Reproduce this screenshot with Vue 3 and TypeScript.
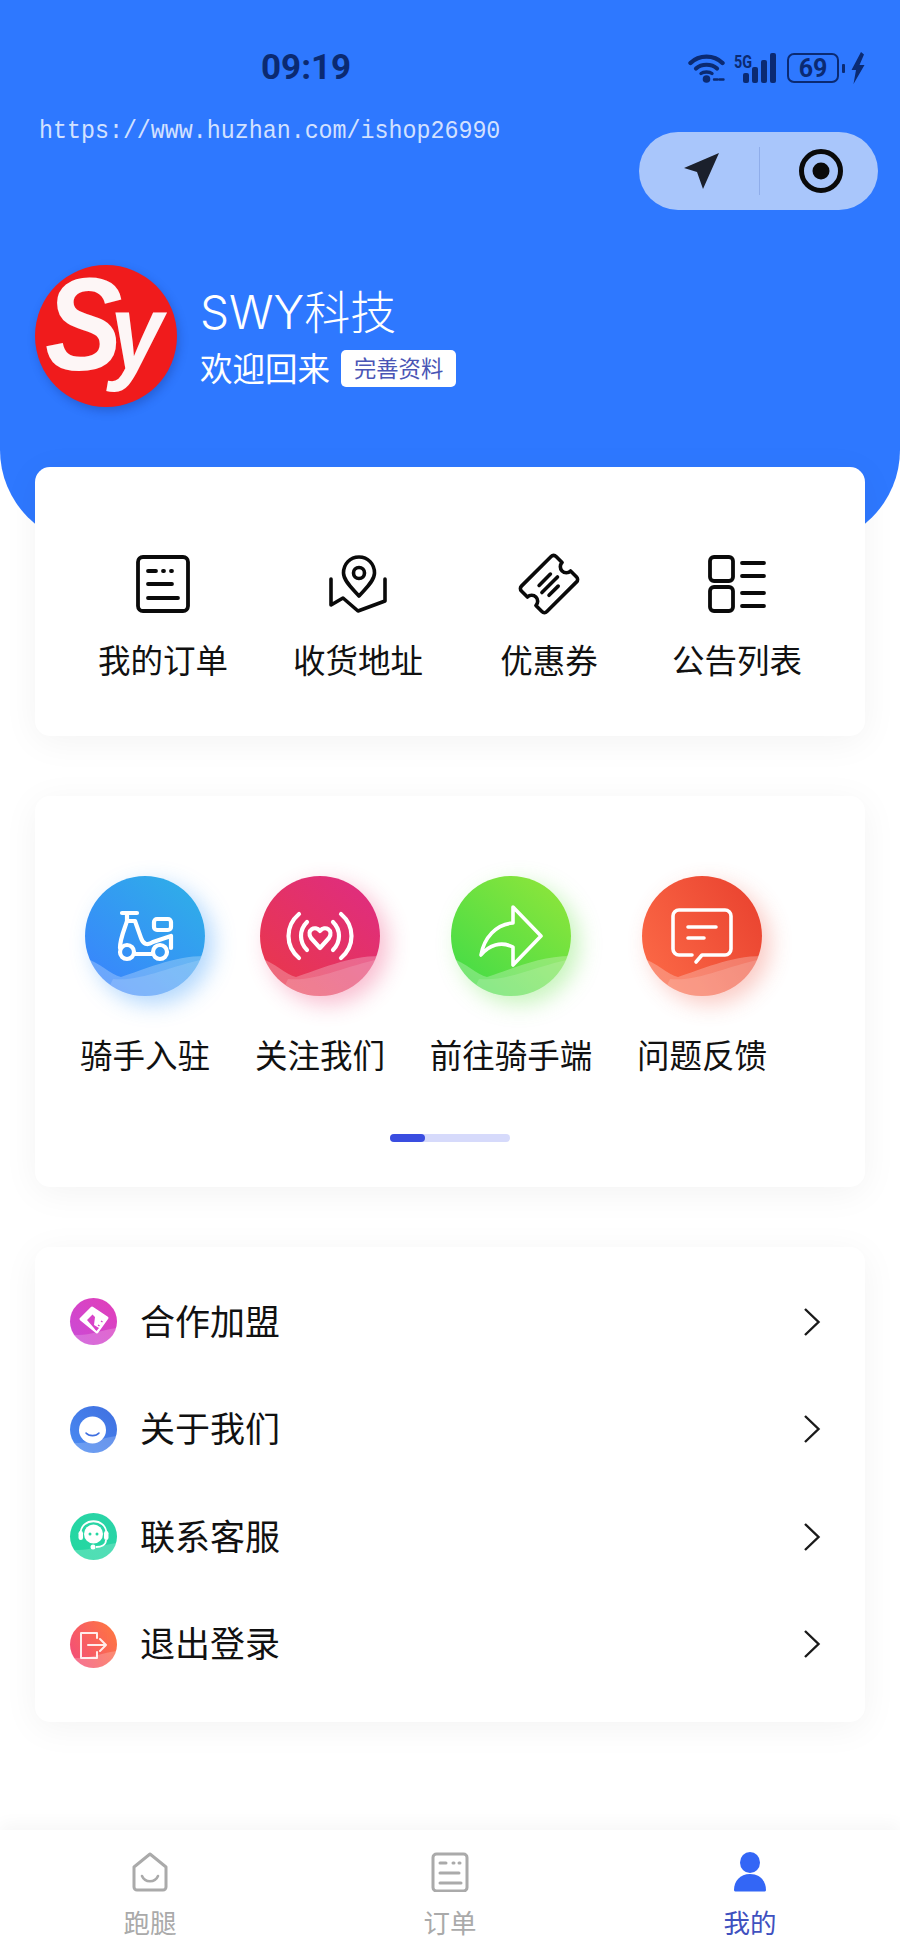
<template>
  <div class="page">
    <header class="hero">
      <div class="status">
        <span class="time">09:19</span>
        <div class="status-icons">
          <svg class="wifi" width="37" height="30" viewBox="0 0 37 30" fill="none" stroke="#0b2a72" stroke-linecap="round">
            <path d="M2.500 10C11 1.500 26 1.500 34.500 10" stroke-width="4.400" />
            <path d="M8 15.500C13.500 10.500 23.500 10.500 29 15.500" stroke-width="4.200" />
            <path d="M13 20.500C15.500 18.500 21.500 18.500 24 20.500" stroke-width="3.400" />
            <circle cx="18.500" cy="26" r="3.800" fill="#0b2a72" stroke="none" />
            <path d="M26 26.500h3.500M31.500 26.500h4" stroke-width="2.400" />
          </svg>
          <div class="signal">
            <span class="five-g">5G</span>
            <div class="bars">
              <i v-for="h in barHeights" :key="h" :style="{ height: h + 'px' }"></i>
            </div>
          </div>
          <div class="battery"><span>69</span></div>
          <i class="battery-nub"></i>
          <svg width="14" height="32" viewBox="0 0 14 32"><path d="M10 0L0.500 18h4.500L2.500 32L13.500 13H8.500L13 2.500Z" fill="#0b2a72" /></svg>
        </div>
      </div>

      <div class="url-row">
        <span class="url">https://www.huzhan.com/ishop26990</span>
        <div class="capsule">
          <div class="capsule-btn nav">
            <svg width="38" height="38" viewBox="0 0 38 38"><path d="M36 1L1 16l13 4 6 17z" fill="#1b202c" /></svg>
          </div>
          <i class="capsule-line"></i>
          <div class="capsule-btn home">
            <svg width="46" height="46" viewBox="0 0 46 46">
              <circle cx="23" cy="23" r="19.500" fill="none" stroke="#0a0a0a" stroke-width="5" />
              <circle cx="23" cy="23" r="8.500" fill="#0a0a0a" />
            </svg>
          </div>
        </div>
      </div>

      <div class="profile">
        <div class="avatar"><span class="logo">S<span class="logo-y">y</span></span></div>
        <div class="info">
          <div class="name">SWY科技</div>
          <div class="welcome">
            <span>欢迎回来</span>
            <span class="complete">完善资料</span>
          </div>
        </div>
      </div>
    </header>

    <main class="cards">
      <section class="card shortcuts">
        <div class="shortcut">
          <svg width="60" height="60" viewBox="0 0 60 60" fill="none" stroke="#0a0a0a" stroke-width="3.800" stroke-linecap="round">
            <rect x="5" y="3" width="50" height="54" rx="5" />
            <path d="M15 17h8M30 17h1M38 17h1M15 30h24M15 44h30" />
          </svg>
          <span>我的订单</span>
        </div>
        <div class="shortcut">
          <svg width="60" height="60" viewBox="0 0 60 60" fill="none" stroke="#0a0a0a" stroke-width="3.600" stroke-linecap="round" stroke-linejoin="round">
            <path d="M31 3C22 3 15.500 10 15.500 19C15.500 27 25 35 31 42C37 35 46.500 27 46.500 19C46.500 10 40 3 31 3Z" />
            <circle cx="31" cy="19" r="5.500" />
            <path d="M3 25V51L15 44L30 57L57 47V25" />
          </svg>
          <span>收货地址</span>
        </div>
        <div class="shortcut">
          <svg width="64" height="64" viewBox="0 0 64 64" fill="none" stroke="#0a0a0a" stroke-width="3.600" stroke-linecap="round" stroke-linejoin="round">
            <g transform="rotate(-45 32 32)">
              <path d="M11 14H53a3.500 3.500 0 0 1 3.500 3.500V26a6 6 0 0 0 0 12V46.500a3.500 3.500 0 0 1-3.500 3.500H11a3.500 3.500 0 0 1-3.500-3.500V38a6 6 0 0 0 0-12V17.500a3.500 3.500 0 0 1 3.500-3.500Z" />
              <path d="M24 26H40M21 33H43M24 40H37" />
            </g>
          </svg>
          <span>优惠券</span>
        </div>
        <div class="shortcut">
          <svg width="60" height="60" viewBox="0 0 60 60" fill="none" stroke="#0a0a0a" stroke-width="3.800" stroke-linecap="round" stroke-linejoin="round">
            <rect x="3" y="3" width="23" height="24" rx="4" />
            <rect x="3" y="33" width="23" height="24" rx="4" />
            <path d="M35 9H57M35 22H57M35 39H57M35 52H57" />
          </svg>
          <span>公告列表</span>
        </div>
      </section>

      <section class="card entries">
        <div class="entry-row">
          <div class="entry">
            <div class="bubble blue">
              <svg viewBox="0 0 120 120" width="120" height="120">
                <path class="wave" d="M0 82C14 86 26 99 36 101C58 94 88 80 120 80V120H0Z" />
                <path class="wave front" d="M28 103C55 106 85 90 120 83V120H20Z" />
                <g class="glyph thick">
                  <path d="M37 37H52M42 37L42 45C40 52 35 62 35 72" />
                  <path d="M42 45H50L56 62C58 68 62 70 68 66L86 60V72" />
                  <rect x="69" y="43" width="17" height="11" rx="3" />
                  <circle cx="42" cy="76" r="7" />
                  <circle cx="75" cy="76" r="7" />
                  <path d="M49 78H68" />
                </g>
              </svg>
            </div>
            <span>骑手入驻</span>
          </div>
          <div class="entry">
            <div class="bubble red">
              <svg viewBox="0 0 120 120" width="120" height="120">
                <path class="wave" d="M0 82C14 86 26 99 36 101C58 94 88 80 120 80V120H0Z" />
                <path class="wave front" d="M28 103C55 106 85 90 120 83V120H20Z" />
                <g class="glyph thick">
                  <path d="M39 38C25 50 25 70 39 82M47 46C39 54 39 66 47 74M81 38C95 50 95 70 81 82M73 46C81 54 81 66 73 74" />
                  <path d="M60 72L51 62C46 54 55 49 60 55C65 49 74 54 69 62Z" />
                </g>
              </svg>
            </div>
            <span>关注我们</span>
          </div>
          <div class="entry wide">
            <div class="bubble green">
              <svg viewBox="0 0 120 120" width="120" height="120">
                <path class="wave" d="M0 82C14 86 26 99 36 101C58 94 88 80 120 80V120H0Z" />
                <path class="wave front" d="M28 103C55 106 85 90 120 83V120H20Z" />
                <path class="glyph" d="M62 31L90 60L62 89V71C50 65 38 69 30 79C33 62 45 48 62 47Z" />
              </svg>
            </div>
            <span>前往骑手端</span>
          </div>
          <div class="entry">
            <div class="bubble orange">
              <svg viewBox="0 0 120 120" width="120" height="120">
                <path class="wave" d="M0 82C14 86 26 99 36 101C58 94 88 80 120 80V120H0Z" />
                <path class="wave front" d="M28 103C55 106 85 90 120 83V120H20Z" />
                <g class="glyph">
                  <path d="M37 34H83a6 6 0 0 1 6 6V73a6 6 0 0 1-6 6H60L54 86M50 79H37a6 6 0 0 1-6-6V40a6 6 0 0 1 6-6" />
                  <path d="M46 51H74M46 62H62" />
                </g>
              </svg>
            </div>
            <span>问题反馈</span>
          </div>
        </div>
        <div class="track"><i class="thumb"></i></div>
      </section>

      <section class="card menu">
        <div v-for="item in menuItems" :key="item.key" class="menu-row">
          <div class="menu-icon" :class="item.key">
            <svg viewBox="0 0 47 47" width="47" height="47">
              <path class="wave" d="M0 36C14 40 30 32 47 30V47H0Z" />
              <g v-if="item.key === 'join'">
                <path d="M11 21L22 10L37 20L27 34Z" fill="#fff" stroke="#fff" stroke-width="3" stroke-linejoin="round" />
                <path d="M17 22L22.500 16.500L25 19L24 27L29 30L26.500 33Z" fill="#d843c8" />
                <path d="M28 27l1.500 1M31 23l1.500 1M25 30.500l1.500 1" stroke="#d843c8" stroke-width="1.400" />
              </g>
              <g v-else-if="item.key === 'about'">
                <circle cx="22.500" cy="24" r="13.500" fill="#fff" />
                <path d="M16 27C19 30.500 26 30.500 29 27" fill="none" stroke="#3f6fe0" stroke-width="1.600" stroke-linecap="round" />
              </g>
              <g v-else-if="item.key === 'service'">
                <circle cx="23.500" cy="21" r="9.500" fill="#fff" />
                <path d="M10.500 21C10.500 4 36.500 4 36.500 21" fill="none" stroke="#fff" stroke-width="1.800" />
                <rect x="8.500" y="18" width="4.500" height="9" rx="2.200" fill="#fff" />
                <rect x="34" y="18" width="4.500" height="9" rx="2.200" fill="#fff" />
                <path d="M36 27C36 32 31 34 26 34" fill="none" stroke="#fff" stroke-width="1.800" />
                <circle cx="23" cy="34" r="2.500" fill="#fff" />
                <circle cx="20" cy="21" r="1.500" fill="#25d7a2" />
                <circle cx="27" cy="21" r="1.500" fill="#25d7a2" />
              </g>
              <g v-else fill="none" stroke="#fff" stroke-width="2" opacity=".88" stroke-linecap="round" stroke-linejoin="round">
                <path d="M27 17V12H11V37H27V31" />
                <path d="M18 24H36M30 18L36 24L30 30" />
              </g>
            </svg>
          </div>
          <span class="menu-label">{{ item.label }}</span>
          <svg class="chevron" width="18" height="28" viewBox="0 0 18 28" fill="none" stroke="#1a1a1a" stroke-width="2.400">
            <path d="M2 1L15.500 14L2 27" />
          </svg>
        </div>
      </section>
    </main>

    <nav class="tabbar">
      <div class="tab">
        <svg width="40" height="40" viewBox="0 0 40 40" fill="none" stroke="#aaa" stroke-width="3" stroke-linejoin="round" stroke-linecap="round">
          <path d="M20 2L36 15V35a3 3 0 0 1-3 3H7a3 3 0 0 1-3-3V15Z" />
          <path d="M12 24C15 31 25 31 28 24" stroke-width="2.600" />
        </svg>
        <span>跑腿</span>
      </div>
      <div class="tab">
        <svg width="40" height="40" viewBox="0 0 40 40" fill="none" stroke="#aaa" stroke-width="3" stroke-linecap="round">
          <rect x="3" y="2" width="34" height="37" rx="3.500" />
          <path d="M10 11H16M23 11H24M29 11H30M10 21H29M10 31H31" />
        </svg>
        <span>订单</span>
      </div>
      <div class="tab active">
        <svg width="40" height="40" viewBox="0 0 40 40" fill="#3366f6">
          <ellipse cx="20" cy="10.500" rx="10" ry="10.500" />
          <path d="M4 38C4 29 10 22 20 22C30 22 36 29 36 38C36 39 35 39.500 34 39.500H6C5 39.500 4 39 4 38Z" />
        </svg>
        <span>我的</span>
      </div>
    </nav>
  </div>
</template>

<script setup lang="ts">
interface MenuItem {
  key: string
  label: string
}

const barHeights: number[] = [10, 16, 23, 30]

const menuItems: MenuItem[] = [
  { key: 'join', label: '合作加盟' },
  { key: 'about', label: '关于我们' },
  { key: 'service', label: '联系客服' },
  { key: 'logout', label: '退出登录' },
]
</script>

<style>
html,
body {
  margin: 0;
  background: #fff;
}
</style>

<style scoped>
.page {
  width: 900px;
  height: 1950px;
  display: flex;
  flex-direction: column;
  background: #fff;
  color: #111;
  font-family: 'Noto Sans', 'Noto Sans CJK SC', sans-serif;
  overflow: hidden;
}

.hero {
  box-sizing: border-box;
  height: 545px;
  background: #2e78ff;
  border-radius: 0 0 95px 95px;
  flex-shrink: 0;
}

.status {
  display: flex;
  justify-content: space-between;
  align-items: center;
  padding: 52px 35px 0 261px;
  height: 32px;
}

.time {
  font-family: Roboto, sans-serif;
  font-weight: 700;
  font-size: 35px;
  line-height: 32px;
  color: #0b2a72;
}

.status-icons {
  display: flex;
  align-items: center;
}

.signal {
  position: relative;
  width: 42px;
  height: 30px;
  margin-left: 9px;
}

.five-g {
  position: absolute;
  left: 0;
  top: 1px;
  font-family: Roboto, sans-serif;
  font-size: 18px;
  font-weight: 700;
  line-height: 15px;
  color: #0b2a72;
  transform: scaleX(0.8);
  transform-origin: left;
}

.bars {
  position: absolute;
  right: 0;
  bottom: 0;
  display: flex;
  align-items: flex-end;
  gap: 3px;
}

.bars i {
  width: 6px;
  border-radius: 2px;
  background: #0b2a72;
}

.battery {
  box-sizing: border-box;
  width: 52px;
  height: 30px;
  margin-left: 11px;
  border: 2.5px solid #0b2a72;
  border-radius: 7px;
  display: flex;
  align-items: center;
  justify-content: center;
  font-family: Roboto, sans-serif;
  font-weight: 700;
  font-size: 25px;
  color: #0b2a72;
}

.battery-nub {
  width: 3px;
  height: 9px;
  margin: 0 6px 0 3px;
  border-radius: 1px;
  background: #0b2a72;
}

.url-row {
  display: flex;
  justify-content: space-between;
  align-items: flex-start;
  margin-top: 35px;
  padding: 0 22px 0 39px;
}

.url {
  display: inline-block;
  font-family: 'Liberation Mono', monospace;
  font-size: 23.300px;
  line-height: 24px;
  color: rgba(255, 255, 255, 0.8);
  transform: scaleY(1.12);
}

.capsule {
  box-sizing: border-box;
  width: 239px;
  height: 78px;
  margin-top: 13px;
  display: flex;
  align-items: center;
  border-radius: 39px;
  background: #a9c6fb;
}

.capsule-btn {
  flex: 1;
  display: flex;
  align-items: center;
  justify-content: center;
}

.capsule-btn.nav {
  padding-left: 6px;
}

.capsule-btn.home {
  padding-left: 4px;
}

.capsule-line {
  width: 1px;
  height: 48px;
  background: #8fadea;
}

.profile {
  display: flex;
  align-items: center;
  gap: 23px;
  margin-top: 55px;
  padding-left: 35px;
}

.avatar {
  width: 142px;
  height: 142px;
  flex-shrink: 0;
  display: flex;
  align-items: center;
  justify-content: center;
  border-radius: 50%;
  background: #f01b1c;
  box-shadow: 2px 4px 10px rgba(20, 40, 120, 0.3);
}

.logo {
  font-family: 'Liberation Sans', sans-serif;
  font-weight: 700;
  font-style: italic;
  font-size: 132px;
  line-height: 130px;
  color: #fdf6f6;
  white-space: nowrap;
  margin: -14px 0 0 -4px;
  transform: scaleX(0.88);
}

.logo-y {
  font-size: 108px;
  margin-left: -14px;
}

.name {
  font-family: Inter, 'Noto Sans CJK SC', sans-serif;
  font-weight: 300;
  font-size: 46px;
  line-height: 60px;
  color: #fff;
}

.welcome {
  display: flex;
  align-items: center;
  gap: 11px;
  margin-top: 5px;
  font-size: 32.500px;
  line-height: 44px;
  color: #fff;
}

.complete {
  padding: 0 13px;
  height: 37px;
  line-height: 37px;
  font-size: 22.300px;
  color: #4a55b5;
  background: #fff;
  border-radius: 5px;
}

.cards {
  position: relative;
  display: flex;
  flex-direction: column;
  gap: 60px;
  margin-top: -78px;
  padding: 0 35px;
}

.card {
  background: #fff;
  border-radius: 15px;
  box-shadow: 0 6px 36px rgba(0, 0, 0, 0.05);
}

.shortcuts {
  display: grid;
  grid-template-columns: 190px 200px 182px 194px;
  padding: 85px 33px 55px;
}

.shortcut {
  display: flex;
  flex-direction: column;
  align-items: center;
  font-size: 32.500px;
  line-height: 40px;
}

.shortcut svg {
  height: 64px;
  margin-bottom: 25px;
}

.entries {
  padding: 80px 0 45px 46px;
}

.entry-row {
  display: flex;
  gap: 47px;
}

.entry {
  width: 128px;
  display: flex;
  flex-direction: column;
  align-items: center;
  gap: 40px;
  font-size: 32.500px;
  line-height: 40px;
  white-space: nowrap;
}

.entry.wide {
  width: 160px;
}

.bubble {
  width: 120px;
  height: 120px;
  border-radius: 50%;
  overflow: hidden;
}

.bubble svg,
.menu-icon svg {
  display: block;
}

.bubble.blue {
  background: linear-gradient(40deg, #3a80ff, #2eb2e6);
  box-shadow: 8px 8px 22px rgba(50, 150, 250, 0.38);
}

.bubble.red {
  background: linear-gradient(40deg, #ea3846, #de2c84);
  box-shadow: 8px 8px 22px rgba(235, 50, 110, 0.32);
}

.bubble.green {
  background: linear-gradient(40deg, #3cdb48, #94e63a);
  box-shadow: 8px 8px 22px rgba(100, 225, 70, 0.36);
}

.bubble.orange {
  background: linear-gradient(60deg, #fd6c48, #e8402e);
  box-shadow: 8px 8px 22px rgba(240, 80, 60, 0.3);
}

.wave {
  fill: rgba(255, 255, 255, 0.2);
}

.bubble .wave {
  fill: rgba(255, 255, 255, 0.26);
}

.bubble .wave.front {
  fill: rgba(255, 255, 255, 0.14);
}

.glyph {
  fill: none;
  stroke: #fff;
  stroke-width: 3.600;
  stroke-linecap: round;
  stroke-linejoin: round;
}

.glyph.thick {
  stroke-width: 4.200;
}

.track {
  width: 120px;
  height: 8px;
  margin: 58px 0 0 309px;
  border-radius: 4px;
  background: #d6dafb;
}

.thumb {
  display: block;
  width: 35px;
  height: 8px;
  border-radius: 4px;
  background: #3a4de0;
}

.menu {
  padding: 21px 0 24px;
}

.menu-row {
  display: flex;
  align-items: center;
  height: 107.500px;
  padding: 0 44px 0 35px;
}

.menu-icon {
  width: 47px;
  height: 47px;
  border-radius: 50%;
  overflow: hidden;
  flex-shrink: 0;
}

.menu-icon.join {
  background: linear-gradient(45deg, #c94bd8, #e23eb8);
}

.menu-icon.about {
  background: linear-gradient(45deg, #4a8bf2, #3f6fe0);
}

.menu-icon.service {
  background: linear-gradient(45deg, #22d8a0, #2bd3a8);
}

.menu-icon.logout {
  background: linear-gradient(60deg, #f24a7e, #ff7a3c);
}

.menu-label {
  flex: 1;
  margin-left: 23px;
  font-size: 35px;
  line-height: 46px;
}

.tabbar {
  display: grid;
  grid-template-columns: repeat(3, 300px);
  margin-top: auto;
  padding: 22px 0 10px;
  background: #fff;
  box-shadow: 0 -6px 16px rgba(0, 0, 0, 0.035);
}

.tab {
  display: flex;
  flex-direction: column;
  align-items: center;
  gap: 14px;
  font-size: 26.500px;
  line-height: 34px;
  color: #aaa;
}

.tab.active {
  color: #3f51bf;
}
</style>
